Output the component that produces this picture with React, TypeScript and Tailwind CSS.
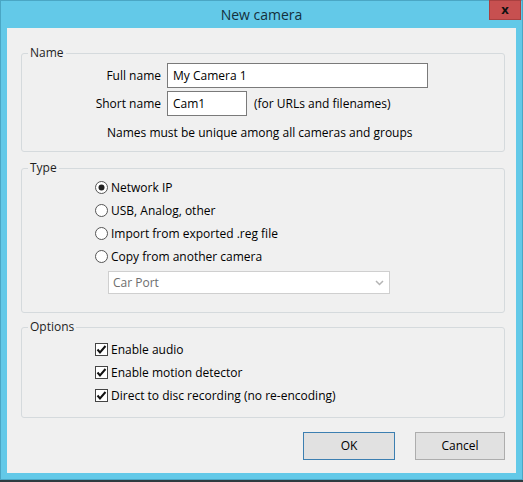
import React from "react";

const font = { fontFamily: "'Open Sans', 'Noto Sans', sans-serif" };

function Radio({ checked }: { checked?: boolean }) {
  return (
    <svg width="13" height="13" viewBox="0 0 13 13" className="shrink-0">
      <circle cx="6.5" cy="6.5" r="6" fill="#fff" stroke="#555" />
      {checked && <circle cx="6.5" cy="6.5" r="3" fill="#222" />}
    </svg>
  );
}

function Check() {
  return (
    <svg width="13" height="13" viewBox="0 0 13 13" className="shrink-0">
      <rect x="0.5" y="0.5" width="12" height="12" fill="#fff" stroke="#444" />
      <path d="M2.5 6.5 L5 9.5 L10.5 3" fill="none" stroke="#111" strokeWidth="2" />
    </svg>
  );
}

function Group({ title, children, className }: { title: string; children: React.ReactNode; className?: string }) {
  return (
    <fieldset className={"mx-0 ml-[14px] mr-[11px] rounded-[3px] border border-[#d5dadd] px-0 " + (className || "")}>
      <legend className="ml-[6px] px-[2px] text-[12px] leading-[16px] text-[#1e1e1e]">{title}</legend>
      {children}
    </fieldset>
  );
}

export default function App() {
  return (
    <div className="h-[482px] w-[523px] bg-[#2e3b40]" style={font}>
      <div className="flex h-[480px] flex-col border border-[#4aa6c4] bg-[#63c9e8]">
        <div className="relative flex h-[27px] items-center justify-center">
          <span className="text-[14px] text-[#14303c]">New camera</span>
          <div className="absolute right-[1px] top-[-1px] flex h-[20px] w-[32px] items-center justify-center border border-[#a94040] bg-[#c75050] text-[13px] font-bold text-[#111]">
            x
          </div>
        </div>
        <div className="mx-[6px] mb-[6px] flex flex-1 flex-col bg-[#f0f0f0] pt-[17px] text-[12px] text-black">
          <Group title="Name" className="pb-[10px]">
            <div className="mt-[2px] flex h-[25px] items-center">
              <span className="w-[139px] text-right">Full name</span>
              <div className="ml-[6px] flex h-[25px] w-[261px] items-center border border-[#7a7a7a] bg-white pl-[5px]">My Camera 1</div>
            </div>
            <div className="mt-[3px] flex h-[25px] items-center">
              <span className="w-[139px] text-right">Short name</span>
              <div className="ml-[6px] flex h-[25px] w-[80px] items-center border border-[#7a7a7a] bg-white pl-[5px]">Cam1</div>
              <span className="ml-[7px]">(for URLs and filenames)</span>
            </div>
            <div className="mt-[9px] pl-[85px] leading-[16px]">Names must be unique among all cameras and groups</div>
          </Group>
          <Group title="Type" className="mt-[8px] pb-[18px]">
            <div className="pl-[73px]">
              {[
                ["Network IP", true],
                ["USB, Analog, other", false],
                ["Import from exported .reg file", false],
                ["Copy from another camera", false],
              ].map(([label, on]) => (
                <div key={label as string} className="flex h-[23px] items-center gap-[3px]">
                  <Radio checked={on as boolean} />
                  <span>{label}</span>
                </div>
              ))}
            </div>
            <div className="ml-[86px] mt-[3px] flex h-[23px] w-[282px] items-center justify-between border border-[#cfcfcf] bg-white pl-[4px] pr-[5px] text-[#6d6d6d]">
              <span>Car Port</span>
              <svg width="9" height="6" viewBox="0 0 9 6">
                <path d="M1 1 L4.5 4.5 L8 1" fill="none" stroke="#b4b4b4" strokeWidth="1.5" />
              </svg>
            </div>
          </Group>
          <Group title="Options" className="mt-[6px] pb-[10px]">
            <div className="mt-[3px] pl-[73px]">
              {["Enable audio", "Enable motion detector", "Direct to disc recording (no re-encoding)"].map((label) => (
                <div key={label} className="flex h-[23px] items-center gap-[3px]">
                  <Check />
                  <span>{label}</span>
                </div>
              ))}
            </div>
          </Group>
          <div className="mr-[11px] mt-[14px] flex justify-end gap-[20px]">
            <button className="h-[28px] w-[92px] border border-[#3c7fb1] bg-[#e1e1e1] text-[12px] text-black" style={font}>
              OK
            </button>
            <button className="h-[28px] w-[90px] border border-[#adadad] bg-[#e1e1e1] text-[12px] text-black" style={font}>
              Cancel
            </button>
          </div>
        </div>
      </div>
    </div>
  );
}
